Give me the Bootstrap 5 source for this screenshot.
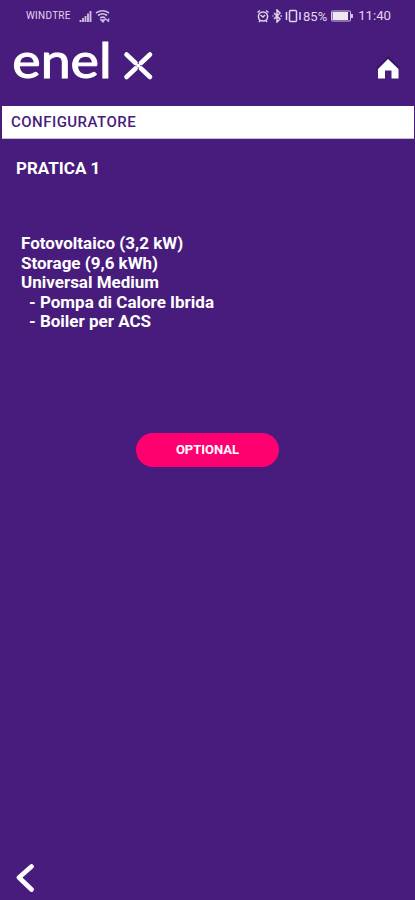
<!DOCTYPE html>
<html lang="it">
<head>
<meta charset="utf-8">
<meta name="viewport" content="width=device-width, initial-scale=1">
<title>Enel X - Configuratore</title>
<link href="https://cdn.jsdelivr.net/npm/bootstrap@5.3.0/dist/css/bootstrap.min.css" rel="stylesheet">
<style>
  body { background: #481c7c; color: #fff; font-family: Roboto, "Liberation Sans", sans-serif; }
  .screen { height: 900px; }
  .status-bar { height: 31px; padding: 1px 24px 0 26px; color: #e2d5ee; font-size: 13.2px; line-height: 1; }
  .carrier { font-size: 10px; letter-spacing: .25px; margin-right: 8px; }
  .percent { font-size: 13px; }
  .brand-row { height: 75px; padding: 0 14px 0 4px; }
  .brand-row text { font-family: Lato, sans-serif; font-size: 48px; }
  .home-link { padding-top: 10px; }
  .title-bar { height: 33px; margin: 0 1px 0 2px; padding: 0 9px; background: #fff; color: #481c7c; border-bottom: 1px solid #c9b9da; font-size: 15px; letter-spacing: .47px; }
  .practice { font-size: 17px; line-height: 20px; margin: 19px 16px 0; }
  .config-list { font-size: 17px; line-height: 19.6px; margin: 56px 21px 0; }
  .sub-list { padding-left: 8px; }
  .btn-optional { --bs-btn-color: #fff; --bs-btn-bg: #ff0070; --bs-btn-hover-color: #fff; --bs-btn-hover-bg: #dc0061; width: 143px; height: 34px; padding: 0; font-size: 13px; line-height: 1; margin-top: 101px; }
</style>
</head>
<body>
<div class="screen d-flex flex-column overflow-hidden">
  <div class="status-bar d-flex align-items-center">
    <span class="carrier">WINDTRE</span>
    <svg width="32" height="14" viewBox="0 0 32 14" fill="none" stroke="#cdbde0">
      <path d="M1.5 13v-2M4 13V9M6.500 13V7M9 13V4.500M11.500 13V2" stroke-width="1.900"/>
      <path d="M17 4q6.500-4.500 13 0M19 6.500q4.500-3.400 9 0M21.200 9q2.500-1.800 4.800 0" stroke-width="1.600"/>
      <path d="M22 11h3.500l-1.500 2zM26 9.500l4 3M30 9.500l-1 3.500" stroke-width="1.300" fill="#cdbde0"/>
    </svg>
    <div class="ms-auto d-flex align-items-center">
      <svg width="46" height="14" viewBox="0 0 46 14" fill="none" stroke="#e2d5ee" stroke-width="1.500">
        <circle cx="6" cy="7.500" r="4.600"/><path d="M.5 3.500 3 1.500M11.500 3.500 9 1.500M3.500 6l2.500 2 2-2M3 11.500 2 13M9 11.500l1 1.500"/>
        <path d="M17 4l6 6-3 3V1l3 3-6 6M15.500 7h1M23.500 7H25" stroke-width="1.500"/>
        <rect x="32.500" y="1.500" width="7" height="11" rx="1"/><path d="M29.500 3v8M43 3v8"/>
      </svg>
      <span class="percent">85%</span>
      <svg class="ms-1" width="23" height="12" viewBox="0 0 23 12"><rect x=".5" y="1" width="19" height="10" rx="1" fill="none" stroke="#cdbde0"/><rect x="1.500" y="2" width="15.500" height="8" fill="#eee6f5"/><path d="M20 4h2v4h-2z" fill="#cdbde0"/></svg>
      <span class="clock ms-1">11:40</span>
    </div>
  </div>
  <header class="brand-row d-flex justify-content-between align-items-start">
    <svg class="overflow-visible" width="152" height="72" viewBox="-10 -10 152 72" role="img" aria-label="enel x">
      <text transform="scale(1.12 1)" x="-1.500 24 50.500 76" y="36.500" fill="#fff" stroke="#fff" stroke-width="1">enel</text>
      <path d="M112.500 13.500 121.500 22M136 13.500 127 22M112.500 36 121.500 27.500M136 36 127 27.500" stroke="#fff" stroke-width="4.600" stroke-linecap="round"/>
      <circle cx="124.250" cy="24.750" r="2" fill="#fff"/>
    </svg>
    <a href="#" class="home-link d-block" aria-label="Home">
      <svg class="d-block" width="28" height="40" viewBox="0 0 28 40"><path d="M3 28 15 16 27 28" fill="none" stroke="#35185f" stroke-width="1.500"/><path d="M15 18 25.500 28V37.500H18.500V29.500H12V37.500H5V28z" fill="#fff"/></svg>
    </a>
  </header>
  <div class="title-bar d-flex align-items-center fw-medium">CONFIGURATORE</div>
  <main class="d-flex flex-column flex-grow-1">
    <h1 class="practice fw-bold">PRATICA 1</h1>
    <ul class="config-list list-unstyled fw-bold">
      <li>Fotovoltaico (3,2 kW)</li>
      <li>Storage (9,6 kWh)</li>
      <li>Universal Medium
        <ul class="list-unstyled sub-list"><li>- Pompa di Calore Ibrida</li><li>- Boiler per ACS</li></ul>
      </li>
    </ul>
    <button class="btn btn-optional rounded-pill fw-bold align-self-center" type="button">OPTIONAL</button>
  </main>
  <footer class="px-3 pb-1">
    <a href="#" class="d-block" aria-label="Indietro"><svg class="d-block" width="20" height="34" viewBox="0 0 20 34"><path d="M15.500 4.500 3 15.500 15.500 27.500" fill="none" stroke="#fff" stroke-width="4.700" stroke-linecap="round" stroke-linejoin="round"/></svg></a>
  </footer>
</div>
<script src="https://cdn.jsdelivr.net/npm/bootstrap@5.3.0/dist/js/bootstrap.bundle.min.js"></script>
</body>
</html>
